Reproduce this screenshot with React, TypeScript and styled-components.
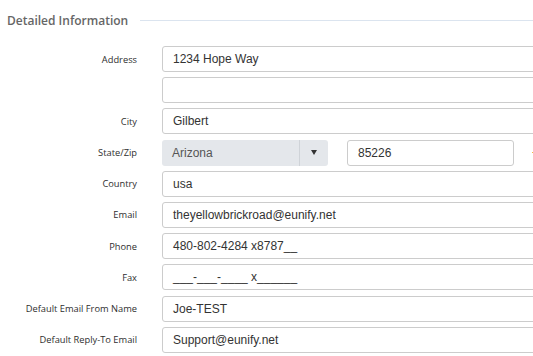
import { Fragment } from 'react';
import styled, { createGlobalStyle } from 'styled-components';

const Global = createGlobalStyle`
  body {
    margin: 0;
    background: #fff;
    overflow: hidden;
  }
`;

const Page = styled.div`
  width: 533px;
  height: 356px;
  overflow: hidden;
`;

const Header = styled.div`
  display: flex;
  align-items: center;
  gap: 12px;
  padding: 12px 0 0 7px;
  height: 16px;
`;

const Title = styled.h2`
  margin: 0;
  font-family: "Open Sans", sans-serif;
  font-size: 12px;
  font-weight: 600;
  color: #666;
  white-space: nowrap;
`;

const Rule = styled.div`
  flex: 1;
  height: 1px;
  background: #dbe4ef;
`;

const Form = styled.div`
  display: grid;
  grid-template-columns: 137px 420px;
  column-gap: 25px;
  row-gap: 5.2px;
  margin-top: 18px;
`;

const Label = styled.label`
  font-family: "Open Sans", sans-serif;
  font-size: 9.3px;
  color: #2e2e2e;
  text-align: right;
  align-self: center;
  white-space: nowrap;
`;

const Input = styled.div<{ $w?: number }>`
  box-sizing: border-box;
  height: 26px;
  width: ${(p) => (p.$w ? `${p.$w}px` : '100%')};
  border: 1px solid #ccc;
  border-radius: 3px;
  padding: 0 10px;
  display: flex;
  align-items: center;
  font-family: "Liberation Sans", Arial, sans-serif;
  font-size: 12px;
  color: #333;
  background: #fff;
  white-space: nowrap;
`;

const Pair = styled.div`
  display: flex;
  align-items: center;
  gap: 19px;
`;

const Select = styled.div`
  box-sizing: border-box;
  height: 26px;
  width: 166px;
  border-radius: 3px;
  background: #e4e7eb;
  display: flex;
  font-family: "Liberation Sans", Arial, sans-serif;
  font-size: 12px;
  color: #555;
`;

const SelectValue = styled.div`
  flex: 1;
  display: flex;
  align-items: center;
  padding-left: 10px;
`;

const Caret = styled.div`
  width: 28px;
  border-left: 1px solid #cfd3d8;
  display: flex;
  align-items: center;
  justify-content: center;
  &::after {
    content: '';
    border-left: 3.5px solid transparent;
    border-right: 3.5px solid transparent;
    border-top: 5px solid #333;
  }
`;

const Dot = styled.span`
  width: 2px;
  height: 1px;
  background: #f5b942;
  margin-left: -1px;
`;

const rows: [string, string][] = [
  ['Address', '1234 Hope Way'],
  ['', ''],
  ['City', 'Gilbert'],
];

const rest: [string, string][] = [
  ['Country', 'usa'],
  ['Email', 'theyellowbrickroad@eunify.net'],
  ['Phone', '480-802-4284 x8787__'],
  ['Fax', '___-___-____ x______'],
  ['Default Email From Name', 'Joe-TEST'],
  ['Default Reply-To Email', 'Support@eunify.net'],
];

function App() {
  return (
    <Page>
      <Global />
      <Header>
        <Title>Detailed Information</Title>
        <Rule />
      </Header>
      <Form>
        {rows.map(([l, v], i) => (
          <Fragment key={'a' + i}>
            <Label>{l}</Label>
            <Input>{v}</Input>
          </Fragment>
        ))}
        <Label>State/Zip</Label>
        <Pair>
          <Select>
            <SelectValue>Arizona</SelectValue>
            <Caret />
          </Select>
          <Input $w={167}>85226</Input>
          <Dot />
        </Pair>
        {rest.map(([l, v], i) => (
          <Fragment key={'b' + i}>
            <Label>{l}</Label>
            <Input>{v}</Input>
          </Fragment>
        ))}
      </Form>
    </Page>
  );
}

export default App;
